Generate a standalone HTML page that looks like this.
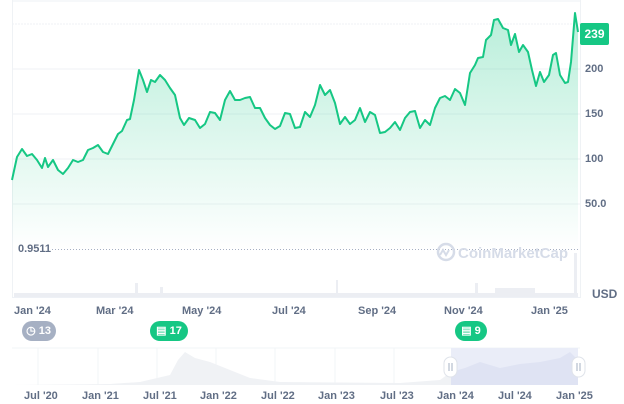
<!DOCTYPE html>
<html><head><meta charset="utf-8"><style>
body{margin:0;width:624px;height:404px;background:#fff;font-family:"Liberation Sans",sans-serif;overflow:hidden;position:relative}
.t{position:absolute;font-size:11px;color:#616e85;font-weight:bold}
.y{position:absolute;left:585px;font-size:11px;color:#616e85;font-weight:bold}
.b{position:absolute;height:20px;border-radius:10px;color:#fff;font-size:11px;font-weight:bold;line-height:20px}
</style></head><body>
<svg width="624" height="404" style="position:absolute;left:0;top:0">
<defs><linearGradient id="g" x1="0" y1="0" x2="0" y2="1"><stop offset="0" stop-color="#16c784" stop-opacity=".3"/><stop offset="1" stop-color="#16c784" stop-opacity="0"/></linearGradient></defs>
<line x1="12" y1="1" x2="580" y2="1" stroke="#eef1f6"/>
<g stroke="#eff2f5" stroke-width="1">
<line x1="12" y1="24" x2="580" y2="24" stroke-dasharray="2 1"/><line x1="12" y1="69" x2="580" y2="69"/><line x1="12" y1="114" x2="580" y2="114"/><line x1="12" y1="159" x2="580" y2="159"/><line x1="12" y1="204" x2="580" y2="204"/>
<line x1="12.5" y1="0" x2="12.5" y2="298"/><line x1="580.5" y1="0" x2="580.5" y2="298"/></g>
<polygon fill="url(#g)" points="12,250 12,180 17,157 22,149 27,156 32,154 37,160 42,168 45,158 48,167 53,160 58,170 63,174 68,168 73,160 78,162 83,160 88,150 93,148 98,145 103,152 108,154 113,144 118,134 122,131 127,120 130,119 134,100 139,70 143,80 147,92 151,80 155,82 160,75 165,80 170,88 175,95 180,118 184,125 189,118 195,120 200,128 205,124 210,112 215,113 220,120 225,100 230,91 235,100 240,100 245,98 250,97 255,108 260,108 265,118 270,125 275,129 280,126 285,113 290,114 295,128 300,127 305,112 310,117 315,105 320,85 325,95 330,90 335,103 340,124 345,117 350,124 355,120 360,108 365,122 370,112 375,115 380,133 385,132 390,128 395,122 400,130 405,118 410,112 415,111 420,128 425,120 430,125 435,108 440,98 445,96 450,100 455,89 460,93 465,105 470,73 475,65 478,58 483,57 486,40 491,35 494,20 498,19 503,28 508,30 511,45 515,34 519,52 523,45 528,52 532,70 536,86 540,72 544,82 549,75 553,55 556,53 560,75 565,83 568,82 571,62 575,13 578,32 578,250"/>
<polyline fill="none" stroke="#16c784" stroke-width="2" stroke-linejoin="round" points="12,180 17,157 22,149 27,156 32,154 37,160 42,168 45,158 48,167 53,160 58,170 63,174 68,168 73,160 78,162 83,160 88,150 93,148 98,145 103,152 108,154 113,144 118,134 122,131 127,120 130,119 134,100 139,70 143,80 147,92 151,80 155,82 160,75 165,80 170,88 175,95 180,118 184,125 189,118 195,120 200,128 205,124 210,112 215,113 220,120 225,100 230,91 235,100 240,100 245,98 250,97 255,108 260,108 265,118 270,125 275,129 280,126 285,113 290,114 295,128 300,127 305,112 310,117 315,105 320,85 325,95 330,90 335,103 340,124 345,117 350,124 355,120 360,108 365,122 370,112 375,115 380,133 385,132 390,128 395,122 400,130 405,118 410,112 415,111 420,128 425,120 430,125 435,108 440,98 445,96 450,100 455,89 460,93 465,105 470,73 475,65 478,58 483,57 486,40 491,35 494,20 498,19 503,28 508,30 511,45 515,34 519,52 523,45 528,52 532,70 536,86 540,72 544,82 549,75 553,55 556,53 560,75 565,83 568,82 571,62 575,13 578,32"/>
<line x1="52" y1="249.5" x2="580" y2="249.5" stroke="#a6b0c3" stroke-dasharray="1 2"/>
<g fill="#eceef3">
<rect x="14" y="293" width="564" height="4"/><rect x="135" y="283" width="3" height="14"/><rect x="160" y="287" width="3" height="10"/><rect x="336" y="280" width="2" height="17"/><rect x="475" y="283" width="3" height="14"/><rect x="495" y="288" width="40" height="9"/><rect x="574" y="253" width="3" height="44"/></g>
<line x1="12" y1="297.5" x2="580" y2="297.5" stroke="#eef1f6"/>
<g stroke="#f2f4f7"><line x1="12" y1="348" x2="580" y2="348"/><line x1="38" y1="348" x2="38" y2="385"/><line x1="98" y1="348" x2="98" y2="385"/><line x1="157" y1="348" x2="157" y2="385"/><line x1="216" y1="348" x2="216" y2="385"/><line x1="275" y1="348" x2="275" y2="385"/><line x1="335" y1="348" x2="335" y2="385"/><line x1="394" y1="348" x2="394" y2="385"/></g>
<rect x="451" y="348" width="127" height="37" fill="#eaedf8"/>
<polygon fill="#f0f2f5" points="12,385 110,384 140,382 170,375 178,360 185,352 195,358 210,362 230,370 250,378 280,382 400,383 440,380 451,372 451,385"/>
<polygon fill="#dfe3f3" points="451,385 451,372 465,368 480,362 500,368 520,364 540,362 560,358 570,352 578,360 578,385"/>
<rect x="444" y="357" width="13" height="20" rx="6.5" fill="#fff" stroke="#dfe3ea"/>
<rect x="572" y="357" width="13" height="20" rx="6.5" fill="#fff" stroke="#dfe3ea"/>
<g stroke="#a6b0c3"><line x1="449" y1="363" x2="449" y2="371"/><line x1="452" y1="363" x2="452" y2="371"/><line x1="577" y1="363" x2="577" y2="371"/><line x1="580" y1="363" x2="580" y2="371"/></g>
<circle cx="446" cy="252" r="8" fill="none" stroke="#d6dce8" stroke-width="2.5"/>
<path d="M440 255 l3-5 3 5 3-5" fill="none" stroke="#d6dce8" stroke-width="2"/>
<text x="458" y="258" font-family="Liberation Sans" font-size="15" font-weight="bold" fill="#d6dce8">CoinMarketCap</text>
</svg>
<div style="position:absolute;left:580px;top:23px;width:29px;height:22px;background:#16c784;border-radius:2px;color:#fff;font-size:12px;font-weight:bold;line-height:22px;text-align:center">239</div>
<div class="y" style="top:63px">200</div><div class="y" style="top:108px">150</div><div class="y" style="top:153px">100</div><div class="y" style="top:198px">50.0</div>
<div class="t" style="left:18px;top:243px">0.9511</div>
<div class="t" style="left:592px;top:287px;font-size:12px">USD</div>
<div class="t" style="left:14px;top:305px">Jan '24</div><div class="t" style="left:96px;top:305px">Mar '24</div><div class="t" style="left:182px;top:305px">May '24</div><div class="t" style="left:272px;top:305px">Jul '24</div><div class="t" style="left:358px;top:305px">Sep '24</div><div class="t" style="left:444px;top:305px">Nov '24</div><div class="t" style="left:531px;top:305px">Jan '25</div>
<div class="b" style="left:22px;top:321px;width:34px;background:#a6b0c3;text-align:right"><span style="margin-right:5px">◷ 13</span></div>
<div class="b" style="left:150px;top:321px;width:38px;background:#16c784;text-align:center">▤ 17</div>
<div class="b" style="left:455px;top:321px;width:32px;background:#16c784;text-align:center">▤ 9</div>
<div class="t" style="left:24px;top:390px">Jul '20</div><div class="t" style="left:82px;top:390px">Jan '21</div><div class="t" style="left:143px;top:390px">Jul '21</div><div class="t" style="left:200px;top:390px">Jan '22</div><div class="t" style="left:261px;top:390px">Jul '22</div><div class="t" style="left:318px;top:390px">Jan '23</div><div class="t" style="left:380px;top:390px">Jul '23</div><div class="t" style="left:437px;top:390px">Jan '24</div><div class="t" style="left:498px;top:390px">Jul '24</div><div class="t" style="left:556px;top:390px">Jan '25</div>
</body></html>
